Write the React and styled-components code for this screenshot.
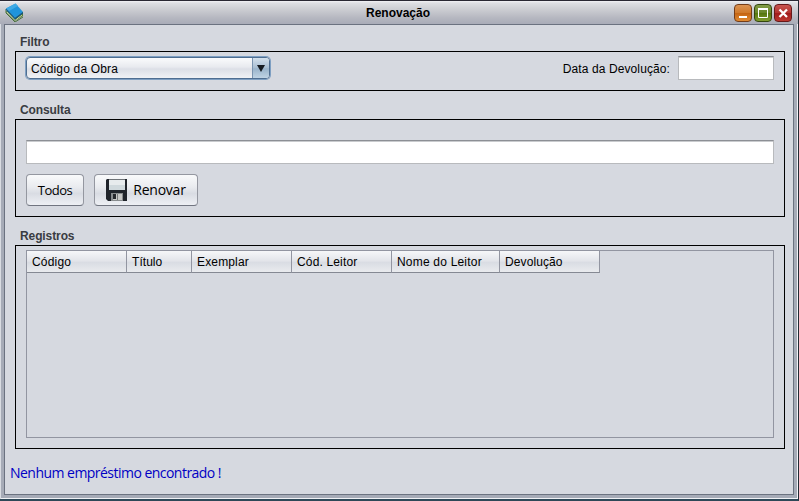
import React from "react";
import styled, { createGlobalStyle } from "styled-components";

const GlobalStyle = createGlobalStyle`
  *, *::before, *::after { box-sizing: border-box; }
  html, body { margin: 0; padding: 0; overflow: hidden; background: #2e4355; }
  body { font-family: "Liberation Sans", Arial, sans-serif; font-size: 12px; color: #000; }
`;

const Window = styled.div`
  width: 799px;
  height: 501px;
  display: flex;
  flex-direction: column;
  background: #a6abb7;
  border: solid;
  border-width: 1px 1px 2px 0;
  border-color: #2a2833 #222a33 #2e4858 #2a2833;
  box-shadow: inset 1px 0 0 #d9dce2, inset -1px -1px 0 #f0f2f6;
`;

const TitleBar = styled.header`
  flex: 0 0 23px;
  display: grid;
  grid-template-columns: 59px 1fr 60px;
  align-items: center;
  padding: 0 4px 0 5px;
  background: linear-gradient(#f2f2f5 0, #dedfe3 2px, #cdced3 8px, #b5b7c0 17px, #a9acb8 23px);
`;

const Title = styled.h1`
  margin: 0;
  padding: 1px 2px 0 0;
  text-align: center;
  font: bold 12px/16px "Liberation Sans", Arial, sans-serif;
`;

const WindowControls = styled.div`
  display: flex;
  gap: 2px;
`;

const ControlButton = styled.button`
  width: 18px;
  height: 18px;
  padding: 0;
  display: grid;
  place-items: center;
  border: 1px solid ${({ $edge }) => $edge};
  border-radius: 4px;
  background: linear-gradient(${({ $top }) => $top}, ${({ $mid }) => $mid} 48%, ${({ $low }) => $low} 52%, ${({ $bottom }) => $bottom});
`;

const Content = styled.main`
  flex: 1;
  margin: 0 4px 4px 4px;
  padding: 9px 8px 0 10px;
  display: flex;
  flex-direction: column;
  background: #d6d9e0;
  border: 1px solid #6b7280;
`;

const Group = styled.section`
  display: flex;
  flex-direction: column;
  height: ${({ $height }) => $height}px;
`;

const GroupTitle = styled.h2`
  margin: 0;
  padding: ${({ $offset }) => $offset}px 0 0 5px;
  height: ${({ $height }) => $height}px;
  font: bold 12px/15px "Liberation Sans", Arial, sans-serif;
  letter-spacing: -0.1px;
  color: #3a3c42;
`;

const GroupBox = styled.div`
  flex: 1;
  border: 1px solid #000;
  padding: ${({ $padding }) => $padding};
`;

const FilterRow = styled.div`
  display: flex;
  align-items: center;
  height: 24px;
`;

const ComboBox = styled.button`
  width: 244px;
  height: 22px;
  padding: 0;
  display: flex;
  align-items: stretch;
  overflow: hidden;
  border: 1px solid #4f6e91;
  border-radius: 4px;
  background: linear-gradient(#fafbfc, #e8eaef 45%, #dcdfe6 55%, #f0f2f5);
  box-shadow: 0 0 0 1px #7e9fc2;
  font: 12px/20px "Liberation Sans", Arial, sans-serif;
  letter-spacing: 0.17px;
  color: #000;
`;

const ComboValue = styled.span`
  flex: 1;
  padding: 1px 0 0 4px;
  text-align: left;
`;

const ComboArrow = styled.span`
  width: 17px;
  display: grid;
  place-items: center;
  border-left: 1px solid #7a94b0;
  background: linear-gradient(#d4e0ec, #a9bfd3 48%, #9ab4cb 54%, #bfd3e4);
`;

const FieldLabel = styled.label`
  margin-left: auto;
  padding-right: 8px;
  padding-top: 1px;
  letter-spacing: 0.1px;
  white-space: nowrap;
`;

const TextField = styled.input`
  display: block;
  width: ${({ $width }) => $width};
  height: 24px;
  padding: 0 5px;
  border: 1px solid #b8babd;
  border-top-color: #8c8f95;
  border-radius: 0;
  background: #fff;
  box-shadow: inset 0 1px 0 #c9cbce;
  outline: 0;
`;

const ButtonRow = styled.div`
  display: flex;
  gap: 10px;
  margin-top: 10px;
`;

const PushButton = styled.button`
  width: ${({ $width }) => $width}px;
  height: 32px;
  padding: 0;
  display: flex;
  align-items: center;
  justify-content: center;
  gap: 5px;
  border: 1px solid #9497a0;
  border-bottom-color: #717580;
  border-radius: 4px;
  background: linear-gradient(#f9fafb, #e9ebef 40%, #d9dce3 62%, #eef0f4);
  font: ${({ $size }) => $size}px/20px "Open Sans", sans-serif;
  letter-spacing: ${({ $spacing }) => $spacing}px;
  color: #000;
`;

const TableFrame = styled.div`
  height: 188px;
  border: 1px solid #9295a1;
`;

const Table = styled.table`
  width: 573px;
  table-layout: fixed;
  border-collapse: separate;
  border-spacing: 0;
`;

const HeaderCell = styled.th`
  width: ${({ $width }) => $width}px;
  height: 22px;
  padding: 0 0 0 5px;
  text-align: left;
  font-weight: normal;
  line-height: 20px;
  letter-spacing: ${({ $spacing }) => $spacing}px;
  white-space: nowrap;
  border-right: 1px solid #9295a1;
  border-bottom: 1px solid #858993;
  background: linear-gradient(#f6f7f9, #e2e4e9 48%, #d9dce3 54%, #e9ebee);
`;

const StatusMessage = styled.p`
  margin: 16px 0 0 -5px;
  font: 14px/16px "Open Sans", sans-serif;
  letter-spacing: -0.53px;
  white-space: nowrap;
  color: #0000c4;
`;

function BookIcon() {
  return (
    <svg width="19" height="19" viewBox="0 0 19 19">
      <path d="m1 9 9 9 8-5V9L3 6Z" fill="#557d35" />
      <path d="m2 9 8.5 8L17 12" fill="none" stroke="#cbd79e" />
      <path d="M1 6v4l9 9 8-5" fill="none" stroke="#48703c" />
      <path d="M1 5.5 10.5.5 18 9l-8 6Z" fill="#2094db" />
      <path d="M1 5.5 10.5.5 13 3 4 8Z" fill="#3eaae5" />
      <path d="m1 5.5 9 9.5v1.5L1 7Z" fill="#145b9c" />
      <path d="m10 15 8-6v1.5l-8 6Z" fill="#115088" />
    </svg>
  );
}

function FloppyIcon() {
  return (
    <svg width="22" height="22" viewBox="0 0 22 22">
      <path d="M1 0h20v22H2L0 20V1Z" fill="#20242b" />
      <path d="M3 0h16v11H3Z" fill="#e7ebed" />
      <path d="M3 0h16v1H3Z" fill="#6f7478" />
      <path d="M3 6h16v5H3Z" fill="#d0d9dd" />
      <path d="M5 14h12v8H5Z" fill="#888c8e" />
      <path d="M7 15h9v6H7Z" fill="#c6c7c5" />
      <path d="M7 15h3v5H7Z" fill="#25282c" />
      <path d="M11 15h1v6h-1Z" fill="#77797b" />
    </svg>
  );
}

const columns = [
  { label: "Código", width: 100, spacing: 0.2 },
  { label: "Título", width: 65, spacing: 0.05 },
  { label: "Exemplar", width: 100, spacing: 0.15 },
  { label: "Cód. Leitor", width: 100, spacing: 0.15 },
  { label: "Nome do Leitor", width: 108, spacing: 0.2 },
  { label: "Devolução", width: 100, spacing: 0.1 },
];

export default function App() {
  return (
    <>
      <GlobalStyle />
      <Window>
        <TitleBar>
          <BookIcon />
          <Title>Renovação</Title>
          <WindowControls>
            <ControlButton aria-label="Minimizar" $edge="#743d19" $top="#dc9353" $mid="#d07a2b" $low="#c56513" $bottom="#df8a32">
              <svg width="16" height="16"><path d="M4 11h8v2H4Z" fill="#fff" /></svg>
            </ControlButton>
            <ControlButton aria-label="Maximizar" $edge="#34470f" $top="#839d49" $mid="#688529" $low="#55760f" $bottom="#829d30">
              <svg width="16" height="16"><path d="M3.5 4v8.5h9V4" fill="none" stroke="#fff" /><path d="M3 3h10v2H3Z" fill="#fff" /></svg>
            </ControlButton>
            <ControlButton aria-label="Fechar" $edge="#681819" $top="#c85550" $mid="#b3332f" $low="#a01b1b" $bottom="#bd3830">
              <svg width="16" height="16"><path d="m4.5 4.5 7.5 7.5m0-7.5-7.5 7.5" stroke="#fff" strokeWidth="2.3" /></svg>
            </ControlButton>
          </WindowControls>
        </TitleBar>
        <Content>
          <Group $height={57}>
            <GroupTitle $height={17} $offset={1}>Filtro</GroupTitle>
            <GroupBox $padding="4px 10px">
              <FilterRow>
                <ComboBox>
                  <ComboValue>Código da Obra</ComboValue>
                  <ComboArrow>
                    <svg width="8" height="7"><path d="M0 0h8L4 7Z" fill="#151b22" /></svg>
                  </ComboArrow>
                </ComboBox>
                <FieldLabel htmlFor="return-date">Data da Devolução:</FieldLabel>
                <TextField id="return-date" $width="96px" />
              </FilterRow>
            </GroupBox>
          </Group>
          <Group $height={126}>
            <GroupTitle $height={28} $offset={12}>Consulta</GroupTitle>
            <GroupBox $padding="20px 10px 0">
              <TextField aria-label="Consulta" $width="100%" />
              <ButtonRow>
                <PushButton $width={58} $size={13} $spacing={-0.5}>Todos</PushButton>
                <PushButton $width={104} $size={14} $spacing={-0.25}><FloppyIcon />Renovar</PushButton>
              </ButtonRow>
            </GroupBox>
          </Group>
          <Group $height={232}>
            <GroupTitle $height={28} $offset={12}>Registros</GroupTitle>
            <GroupBox $padding="4px 10px 0">
              <TableFrame>
                <Table>
                  <thead>
                    <tr>
                      {columns.map((column) => (
                        <HeaderCell key={column.label} $width={column.width} $spacing={column.spacing}>
                          {column.label}
                        </HeaderCell>
                      ))}
                    </tr>
                  </thead>
                </Table>
              </TableFrame>
            </GroupBox>
          </Group>
          <StatusMessage>Nenhum empréstimo encontrado !</StatusMessage>
        </Content>
      </Window>
    </>
  );
}
